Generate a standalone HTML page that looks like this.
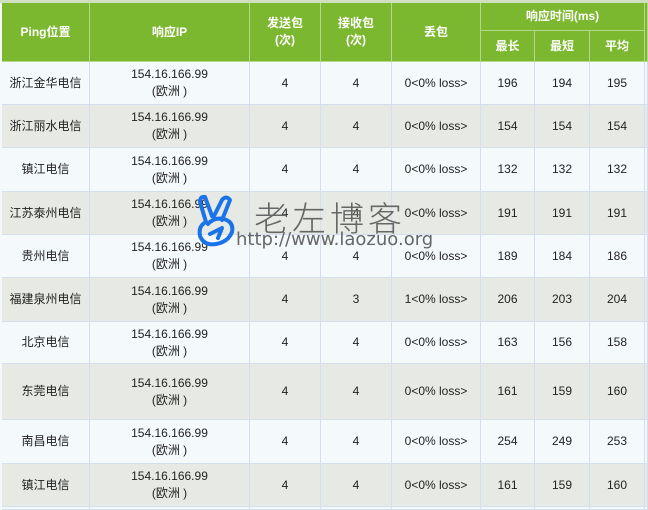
<!DOCTYPE html>
<html><head><meta charset="utf-8"><style>
html,body{margin:0;padding:0;width:648px;height:510px;overflow:hidden;background:#f4f9fb;}
body{font-family:"Liberation Sans","Noto Sans CJK SC",sans-serif;font-size:12px;color:#222;position:relative;}
.c{position:absolute;box-sizing:border-box;display:flex;align-items:center;justify-content:center;text-align:center;line-height:17px;border-right:1px solid #d3dfee;border-bottom:1px solid #d3dfee;}
.h{background:#7cb82f;color:#fff;font-weight:bold;border-color:#b4d88a;}
.top{position:absolute;left:0;top:0;width:648px;height:3px;background:#cfe0c0;}
.wm{position:absolute;left:190px;top:192px;}
</style></head><body>
<div class="top"></div>
<div id="t"></div>
<div class="wm">
<svg width="52" height="58" viewBox="0 0 52 58" style="position:absolute;left:2px;top:0">
<g fill="none" stroke="#1a73e8" stroke-width="4" stroke-linecap="round" stroke-linejoin="round">
<path d="M14 30 L8 10 Q8 4 13 5 L20 24"/>
<path d="M22 24 L30 8 Q34 3 38 8 L30 28"/>
<path d="M14 30 Q6 34 8 44 Q12 54 24 52 Q36 50 40 40 Q42 30 32 27 Q22 25 16 32"/>
<path d="M18 42 L30 36 L26 46"/>
</g></svg>
<div style="position:absolute;left:64px;top:0px;font-size:34px;color:#666;letter-spacing:4px;white-space:nowrap;font-family:'Noto Sans CJK SC',sans-serif;font-weight:300">老左博客</div>
<div style="position:absolute;left:46px;top:37px;font-size:18px;color:#666;white-space:nowrap;font-family:'DejaVu Sans',sans-serif">http://www.laozuo.org</div>
</div>
<script>
var X=[2,90,250,321,392,481,535,590,645,648];
var Y=[62,105,148,192,235,278,322,364,420,464,507,510];
var html='';
function cell(x1,x2,y1,y2,txt,cls,bg){html+='<div class="c '+(cls||'')+'" style="left:'+x1+'px;top:'+y1+'px;width:'+(x2-x1)+'px;height:'+(y2-y1)+'px;'+(bg?'background:'+bg:'')+'">'+txt+'</div>';}
cell(2,90,3,62,'Ping位置','h');cell(90,250,3,62,'响应IP','h');cell(250,321,3,62,'发送包<br>(次)','h');
cell(321,392,3,62,'接收包<br>(次)','h');cell(392,481,3,62,'丢包','h');cell(481,645,3,31,'响应时间(ms)','h');
cell(481,535,31,62,'最长','h');cell(535,590,31,62,'最短','h');cell(590,645,31,62,'平均','h');cell(645,648,3,62,'','h');
var rows=[['浙江金华电信',4,4,0,196,194,195],['浙江丽水电信',4,4,0,154,154,154],['镇江电信',4,4,0,132,132,132],['江苏泰州电信',4,4,0,191,191,191],['贵州电信',4,4,0,189,184,186],['福建泉州电信',4,3,1,206,203,204],['北京电信',4,4,0,163,156,158],['东莞电信',4,4,0,161,159,160],['南昌电信',4,4,0,254,249,253],['镇江电信',4,4,0,161,159,160],['',''] ];
for(var i=0;i<rows.length;i++){var r=rows[i],bg=i%2?'#e7eae4':'#f4f9fb',y1=Y[i],y2=Y[i+1];
var v=[r[0],r[0]?'154.16.166.99<br>(欧洲 )':'',r[1]||'',r[2]||'',r[0]?r[3]+'&lt;0% loss&gt;':'',r[4]||'',r[5]||'',r[6]||'',''];
for(var j=0;j<9;j++)cell(X[j],X[j+1],y1,y2,v[j],'',bg);}
document.getElementById('t').innerHTML=html;
</script>
</body></html>
